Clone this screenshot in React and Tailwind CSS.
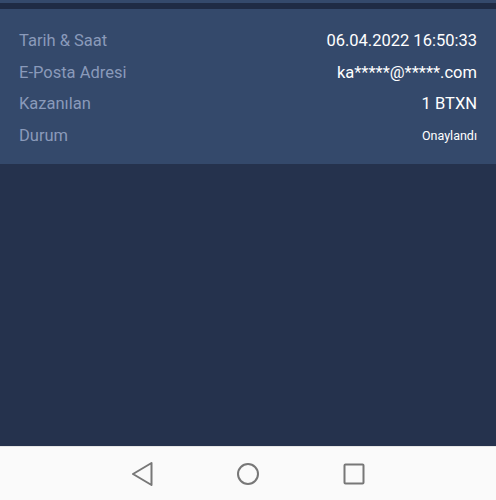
import React from "react";

const rows = [
  { label: "Tarih & Saat", value: "06.04.2022 16:50:33" },
  { label: "E-Posta Adresi", value: "ka*****@*****.com" },
  { label: "Kazanılan", value: "1 BTXN" },
  { label: "Durum", value: "Onaylandı", small: true },
];

export default function App() {
  return (
    <div
      className="w-[496px] h-[500px] flex flex-col bg-[#25324d] overflow-hidden"
      style={{ fontFamily: "Roboto, 'Liberation Sans', sans-serif" }}
    >
      <div className="h-[3px] bg-[#34496b]" />
      <div className="h-[6px] bg-[#1f2b44]" />
      <div className="bg-[#34496b] px-[19px] pt-[17px] pb-[12px] flex flex-col">
        {rows.map((r) => (
          <div key={r.label} className="h-[31.5px] flex items-center justify-between">
            <span className="text-[16.5px] text-[#8a9aba]">{r.label}</span>
            <span className={r.small ? "text-[12.5px] text-white" : "text-[16.5px] text-white"}>
              {r.value}
            </span>
          </div>
        ))}
      </div>
      <div className="flex-1" />
      <div className="h-[54px] bg-[#fafafa] border-t border-[#e6e6e6] flex items-center justify-center gap-[82px]">
        <svg width="24" height="24" viewBox="0 0 24 24" className="text-[#777]">
          <path d="M21.5 1 L3 12 L21.5 23 Z" fill="none" stroke="currentColor" strokeWidth="2" strokeLinejoin="round" />
        </svg>
        <svg width="24" height="24" viewBox="0 0 24 24" className="text-[#777]">
          <circle cx="12" cy="12" r="10" fill="none" stroke="currentColor" strokeWidth="2" />
        </svg>
        <svg width="24" height="24" viewBox="0 0 24 24" className="text-[#777]">
          <rect x="2.5" y="2.5" width="19" height="19" rx="1" fill="none" stroke="currentColor" strokeWidth="2" />
        </svg>
      </div>
    </div>
  );
}
